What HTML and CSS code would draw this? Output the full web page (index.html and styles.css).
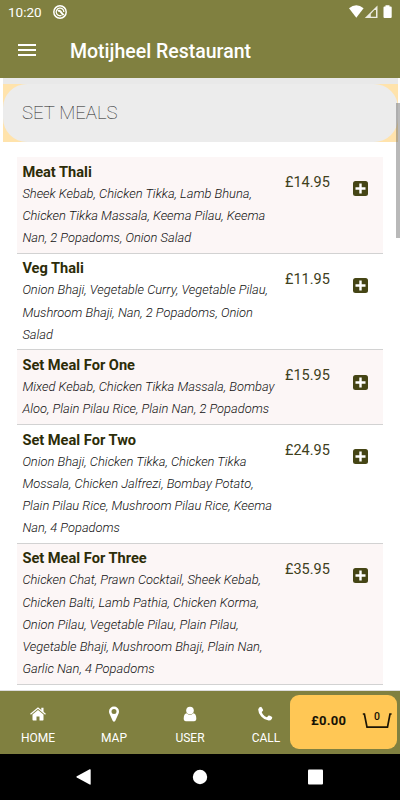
FILE: index.html
```html
<!DOCTYPE html>
<html lang="en">
<head>
    <meta charset="UTF-8">
    <meta name="viewport" content="width=device-width, initial-scale=1.0">
    <title>Motijheel Restaurant</title>
    <link rel="stylesheet" href="styles.css">
</head>
<body>
    <header class="header">
        <div class="status-bar">
            <span class="clock">10:20</span>
            <svg class="status-app" width="14" height="14" viewBox="0 0 14 14" fill="none" stroke="#fff">
                <circle cx="7" cy="7" r="6.2" stroke-width="1.5"/>
                <path d="M8.500 10.400A3.800 3.800 0 1 1 10.800 7" stroke-width="1.300"/>
                <path d="M5 6.200q1.400-1.200 2.600.4t3 3.600" stroke-width="2"/>
            </svg>
            <svg class="status-icons" width="44" height="14" viewBox="0 0 44 14" fill="#fff">
                <path d="M0 3.2Q7.3-2.6 14.6 3.2L7.3 12.7z"/>
                <path d="M28.5.4V13H15.8zM27 5h-1.6l-3.6 4v2.7H27z" fill-rule="evenodd" opacity=".85"/>
                <path d="M36.500 1.500V.2h4v1.300h1.200q1 0 1 1v9.600q0 1-1 1h-6.200q-1 0-1-1V2.500q0-1 1-1z"/>
            </svg>
        </div>
        <div class="toolbar">
            <div class="menu-icon"><span></span><span></span><span></span></div>
            <h1>Motijheel Restaurant</h1>
        </div>
    </header>

    <main class="content">
        <div class="category"><h2>SET MEALS</h2></div>

        <div class="meals">
            <div class="meal">
                <div class="meal-info">
                    <h3>Meat Thali</h3>
                    <p>Sheek Kebab, Chicken Tikka, Lamb Bhuna, Chicken Tikka Massala, Keema Pilau, Keema Nan, 2 Popadoms, Onion Salad</p>
                </div>
                <span class="price">£14.95</span>
                <svg class="add" viewBox="0 0 15 15"><rect width="15" height="15" rx="2.5"/><path d="M7.5 2.5v10M2.5 7.5h10"/></svg>
            </div>
            <div class="meal">
                <div class="meal-info">
                    <h3>Veg Thali</h3>
                    <p>Onion Bhaji, Vegetable Curry, Vegetable Pilau, Mushroom Bhaji, Nan, 2 Popadoms, Onion Salad</p>
                </div>
                <span class="price">£11.95</span>
                <svg class="add" viewBox="0 0 15 15"><rect width="15" height="15" rx="2.5"/><path d="M7.5 2.5v10M2.5 7.5h10"/></svg>
            </div>
            <div class="meal">
                <div class="meal-info">
                    <h3>Set Meal For One</h3>
                    <p>Mixed Kebab, Chicken Tikka Massala, Bombay Aloo, Plain Pilau Rice, Plain Nan, 2 Popadoms</p>
                </div>
                <span class="price">£15.95</span>
                <svg class="add" viewBox="0 0 15 15"><rect width="15" height="15" rx="2.5"/><path d="M7.5 2.5v10M2.5 7.5h10"/></svg>
            </div>
            <div class="meal">
                <div class="meal-info">
                    <h3>Set Meal For Two</h3>
                    <p>Onion Bhaji, Chicken Tikka, Chicken Tikka Mossala, Chicken Jalfrezi, Bombay Potato, Plain Pilau Rice, Mushroom Pilau Rice, Keema Nan, 4 Popadoms</p>
                </div>
                <span class="price">£24.95</span>
                <svg class="add" viewBox="0 0 15 15"><rect width="15" height="15" rx="2.5"/><path d="M7.5 2.5v10M2.5 7.5h10"/></svg>
            </div>
            <div class="meal">
                <div class="meal-info">
                    <h3>Set Meal For Three</h3>
                    <p>Chicken Chat, Prawn Cocktail, Sheek Kebab, Chicken Balti, Lamb Pathia, Chicken Korma, Onion Pilau, Vegetable Pilau, Plain Pilau, Vegetable Bhaji, Mushroom Bhaji, Plain Nan, Garlic Nan, 4 Popadoms</p>
                </div>
                <span class="price">£35.95</span>
                <svg class="add" viewBox="0 0 15 15"><rect width="15" height="15" rx="2.5"/><path d="M7.5 2.5v10M2.5 7.5h10"/></svg>
            </div>
        </div>
        <div class="scrollbar"></div>
    </main>

    <nav class="tabs">
        <a class="tab">
            <svg width="16" height="16" viewBox="0 0 16 16" fill="#fff">
                <path d="M8 4l5.500 4.500v5.200q0 .7-.7.7H9.500v-3.800h-3v3.800H3.200q-.7 0-.7-.7V8.500z"/>
                <path d="M.5 8.300L8 2l7.500 6.300" fill="none" stroke="#fff" stroke-width="1.200"/>
                <path d="M11.300 1.800h2.200v4.700l-2.200-1.900z"/>
            </svg>
            <span>HOME</span>
        </a>
        <a class="tab">
            <svg width="16" height="16" viewBox="0 0 16 16" fill="#fff">
                <path d="M8 .5a5 5 0 0 1 5 5q0 1-.4 1.900L9.200 15Q8 16.400 6.800 15L3.400 7.400Q3 6.500 3 5.500a5 5 0 0 1 5-5zM8 3a2.500 2.500 0 1 0 0 5a2.500 2.500 0 0 0 0-5z" fill-rule="evenodd"/>
            </svg>
            <span>MAP</span>
        </a>
        <a class="tab">
            <svg width="16" height="16" viewBox="0 0 16 16" fill="#fff">
                <circle cx="8" cy="4.500" r="3.800"/>
                <path d="M4.700 7.300Q8 10.400 11.300 7.300Q14.300 7.800 14.300 12.600Q14.300 15.300 12 15.300H4Q1.700 15.300 1.700 12.600Q1.700 7.800 4.700 7.300z"/>
            </svg>
            <span>USER</span>
        </a>
        <a class="tab">
            <svg width="16" height="16" viewBox="0 0 16 16" fill="#fff">
                <path d="M.2 3.500Q.7 1 3.100.8Q3.700 1 5.200 4.100Q5.400 4.800 3.800 6Q3.500 6.400 5 8.400Q6.700 10.500 8.700 11.300Q9.200 11.400 10.500 9.600Q11.200 9.300 14.100 11Q14.500 11.400 13.800 13.100Q12.700 14.700 10.700 14.600Q6.200 14 3.200 10.500Q.2 7 .2 3.500z"/>
            </svg>
            <span>CALL</span>
        </a>
        <div class="basket">
            <span class="total">£0.00</span>
            <div class="basket-icon">
                <svg width="30" height="16" viewBox="0 0 30 16" fill="none" stroke="#1c1505" stroke-width="1.700">
                    <path d="M.8 1h1.600L5 14.200h20.500L28 1h1.600"/>
                </svg>
                <span class="count">0</span>
            </div>
        </div>
    </nav>

    <div class="system-nav">
        <svg width="16" height="16" viewBox="0 0 16 16" fill="#fff"><path d="M.8 7.300L13.700.2q1-.3 1 .8v14q0 1-1 .600L.8 8.500q-.8-.6 0-1.200z"/></svg>
        <svg width="16" height="16" viewBox="0 0 16 16" fill="#fff"><circle cx="8" cy="8" r="7.200"/></svg>
        <svg width="16" height="16" viewBox="0 0 16 16" fill="#fff"><rect y=".5" width="15" height="15" rx="1"/></svg>
    </div>
</body>
</html>
```
FILE: styles.css
```css
* {
    box-sizing: border-box;
    font-family: Roboto, sans-serif;
}

body {
    margin: 0;
    height: 800px;
    display: flex;
    flex-direction: column;
    overflow: hidden;
    background-color: #fff;
}

h1, h2, h3, p {
    margin: 0;
}

svg {
    display: block;
    flex: none;
}

.header {
    height: 78px;
    flex: none;
    background-color: #808040;
    color: #fff;
}

.status-bar {
    display: flex;
    height: 24px;
    padding: 5px 7px 0 8px;
}

.clock {
    width: 45px;
    font-size: 13.5px;
    line-height: 15px;
}

.status-icons {
    margin-left: auto;
}

.toolbar {
    display: flex;
    align-items: center;
    height: 54px;
    padding-left: 18px;
}

.menu-icon {
    width: 52px;
    display: flex;
    flex-direction: column;
    gap: 3px;
    padding-bottom: 2px;
}

.menu-icon span {
    width: 18px;
    height: 2px;
    background-color: #fff;
}

h1 {
    padding-top: 1px;
    font-size: 19.5px;
    font-weight: 500;
    line-height: 24px;
}

.content {
    position: relative;
    height: 613px;
    flex: none;
    padding: 0 2px 0 3px;
    overflow: hidden;
    box-shadow: inset 0 -1px #dcdcdc;
}

.category {
    height: 64px;
    border-top: 6px solid #e9e9e9;
    background-color: #ffe3ac;
}

.category h2 {
    height: 58px;
    padding-left: 19px;
    border-radius: 24px;
    background-color: #ececec;
    color: #222;
    font-size: 18.7px;
    font-weight: 100;
    line-height: 58px;
}

.meals {
    padding: 15px 15px 0 14px;
}

.meal {
    display: flex;
    border-bottom: 1px solid #d2d2d2;
    padding: 4.8px 15px 3.4px 5.4px;
}

.meal:nth-child(odd) {
    background-color: #fcf6f6;
}

.meal-info {
    width: 262.6px;
    flex: none;
}

.meal h3 {
    color: #2c2c08;
    font-size: 14.6px;
    font-weight: 700;
    line-height: 21px;
}

.meal p {
    width: 254px;
    color: #111;
    font-size: 12.88px;
    font-style: italic;
    font-weight: 300;
    line-height: 22.15px;
}

.price {
    padding-top: 12.2px;
    color: #40401c;
    font-size: 14.5px;
    line-height: 18px;
}

.add {
    width: 15px;
    height: 15px;
    margin: 19.5px 0 0 auto;
    fill: #454515;
    stroke: #fff;
    stroke-width: 2.4;
}

.add rect {
    stroke: none;
}

.scrollbar {
    position: absolute;
    top: 25px;
    right: 0;
    width: 4px;
    height: 135px;
    background-color: rgba(100, 100, 100, 0.45);
}

.tabs {
    display: flex;
    height: 63px;
    flex: none;
    background-color: #808040;
    color: #fff;
}

.tab {
    width: 76px;
    flex: none;
    display: flex;
    flex-direction: column;
    align-items: center;
    padding-top: 15px;
    font-size: 12px;
    line-height: 16px;
    gap: 8px;
}

.tab:nth-child(4) {
    margin-right: -14.5px;
}

.basket {
    width: 107.5px;
    height: 54px;
    margin-top: 4px;
    padding: 0 5px 3px 21.5px;
    display: flex;
    align-items: center;
    justify-content: space-between;
    border-radius: 9px;
    background-color: #ffc755;
    color: #161205;
}

.total {
    font-size: 13px;
    font-weight: 700;
    letter-spacing: 0.3px;
}

.basket-icon {
    position: relative;
}

.count {
    position: absolute;
    top: -2px;
    left: 0;
    width: 30px;
    text-align: center;
    font-size: 10.5px;
    font-weight: 500;
    line-height: 12px;
}

.system-nav {
    flex: 1;
    display: flex;
    align-items: center;
    justify-content: center;
    gap: 100px;
    background-color: #000;
}
```
